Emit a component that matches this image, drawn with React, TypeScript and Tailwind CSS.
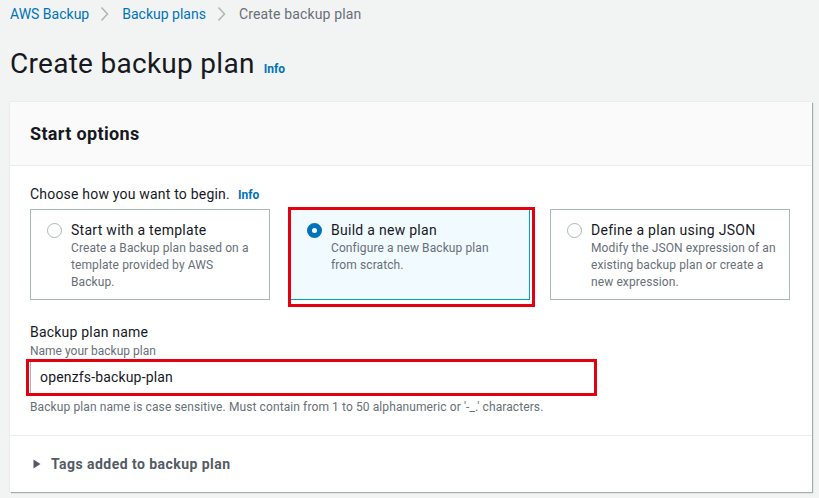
import React from "react";

const options = [
  {
    title: "Start with a template",
    desc: ["Create a Backup plan based on a", "template provided by AWS", "Backup."],
    selected: false,
  },
  {
    title: "Build a new plan",
    desc: ["Configure a new Backup plan", "from scratch."],
    selected: true,
  },
  {
    title: "Define a plan using JSON",
    desc: ["Modify the JSON expression of an", "existing backup plan or create a", "new expression."],
    selected: false,
  },
];

function Chevron() {
  return (
    <svg width="9" height="16" viewBox="0 0 9 16" className="ml-[11px] mr-[13px]">
      <path d="M1.5 1.5l6 6.5-6 6.5" fill="none" stroke="#aab7b8" strokeWidth="1.5" />
    </svg>
  );
}

function Radio({ checked }: { checked: boolean }) {
  return checked ? (
    <span className="block w-[15px] h-[15px] rounded-full border-[5px] border-[#0073bb] bg-white shrink-0" />
  ) : (
    <span className="block w-[15px] h-[15px] rounded-full border-[1.5px] border-[#aab7b8] bg-white shrink-0" />
  );
}

export default function App() {
  return (
    <div
      className="w-[819px] h-[498px] bg-[#f2f3f3] overflow-hidden text-[#16191f]"
      style={{ fontFamily: "Roboto, 'Noto Sans', sans-serif" }}
    >
      <nav className="flex items-center px-[10px] h-[28px] text-[14px]">
        <span className="text-[#0073bb]">AWS Backup</span>
        <Chevron />
        <span className="text-[#0073bb]">Backup plans</span>
        <Chevron />
        <span className="text-[#687078] tracking-[0.15px]">Create backup plan</span>
      </nav>

      <div className="flex items-baseline px-[10px] mt-[18px] h-[40px]">
        <h1 className="text-[28px] leading-[36px] font-normal tracking-[0.28px]">Create backup plan</h1>
        <span className="ml-[9px] text-[12px] font-bold text-[#0073bb]">Info</span>
      </div>

      <section className="mx-[10px] mt-[16px] w-[802px] bg-white shadow-[1px_1px_1px_rgba(0,28,36,0.3),0_0_1px_rgba(0,28,36,0.2)]">
        <header className="h-[64px] bg-[#fafafa] border-b border-[#eaeded] flex items-center px-[20px]">
          <h2 className="text-[18px] font-bold tracking-[0.35px]">Start options</h2>
        </header>

        <div className="px-[20px] pt-[18px]">
          <div className="flex items-baseline text-[14px] h-[20px]">
            <span className="tracking-[0.2px]">Choose how you want to begin.</span>
            <span className="ml-[8px] text-[12px] font-bold text-[#0073bb]">Info</span>
          </div>

          <div className="flex gap-[20px] mt-[5px]">
            {options.map((o) => (
              <div
                key={o.title}
                className={`relative w-[240px] h-[91px] flex gap-[9px] pl-[16px] pr-[8px] pt-[11px] border ${
                  o.selected ? "bg-[#f1faff] border-[#00a1c9]" : "bg-white border-[#aab7b8]"
                }`}
              >
                <div className="pt-[2px]">
                  <Radio checked={o.selected} />
                </div>
                <div>
                  <div className="text-[14px] leading-[18px] tracking-[0.28px]">{o.title}</div>
                  <div className="text-[12px] leading-[17px] text-[#687078] mt-[1px] tracking-[0.1px]">
                    {o.desc.map((l) => (
                      <div key={l}>{l}</div>
                    ))}
                  </div>
                </div>
                {o.selected && (
                  <div className="absolute -left-[3px] -top-[3px] -right-[6px] -bottom-[8px] border-[3px] border-[#e3000f]" />
                )}
              </div>
            ))}
          </div>

          <div className="mt-[22px] text-[14px] leading-[20px] tracking-[0.2px]">Backup plan name</div>
          <div className="text-[12px] leading-[16px] text-[#687078] mt-[1px]">Name your backup plan</div>
          <div className="relative mt-[2px] w-[566px] h-[33px] flex items-center px-[9px] text-[14px] tracking-[0.16px] border border-[#aab7b8] bg-white">
            openzfs-backup-plan
            <div className="absolute -left-[5px] -top-[3px] -right-[2px] -bottom-[3px] border-[3px] border-[#e3000f]" />
          </div>
          <div className="mt-[5px] text-[12px] leading-[16px] text-[#687078] pb-[20px] tracking-[0.1px]">
            Backup plan name is case sensitive. Must contain from 1 to 50 alphanumeric or '-_.' characters.
          </div>
        </div>

        <div className="border-t border-[#eaeded] h-[57px] flex items-center px-[23px]">
          <svg width="8" height="10" viewBox="0 0 8 10" className="mr-[10px]">
            <path d="M0.5 0.5L7.5 5L0.5 9.5Z" fill="#545b64" />
          </svg>
          <span className="text-[14px] font-bold text-[#545b64] tracking-[0.45px]">Tags added to backup plan</span>
        </div>
      </section>
    </div>
  );
}
